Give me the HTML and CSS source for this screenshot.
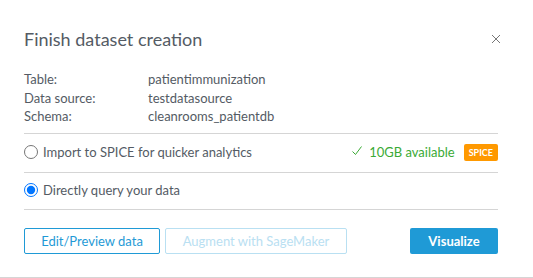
FILE: index.html
```html
<!DOCTYPE html>
<html lang="en">
<head>
  <meta charset="UTF-8" />
  <title>Finish dataset creation</title>
  <link rel="stylesheet" href="styles.css">
</head>
<body>
  <div class="modal">
    <header class="modal-header">
      <h2>Finish dataset creation</h2>
      <button class="close" aria-label="Close">
        <svg viewBox="0 0 10 10" width="10" height="10">
          <path d="M1 1 L9 9 M9 1 L1 9" stroke="#777" stroke-width="1" fill="none" />
        </svg>
      </button>
    </header>

    <dl class="details">
      <dt>Table:</dt><dd>patientimmunization</dd>
      <dt>Data source:</dt><dd>testdatasource</dd>
      <dt>Schema:</dt><dd>cleanrooms_patientdb</dd>
    </dl>

    <div class="options">
      <label class="option">
        <input type="radio" name="mode" />
        <span class="option-label">Import to SPICE for quicker analytics</span>
        <span class="capacity">
          <svg viewBox="0 0 10 10" width="10" height="10">
            <path d="M0.5 5.5 L3.5 8.5 L9.5 0.5" stroke="currentColor" stroke-width="1" fill="none" />
          </svg>
          10GB available
        </span>
        <span class="badge">SPICE</span>
      </label>
      <label class="option">
        <input type="radio" name="mode" checked />
        <span class="option-label">Directly query your data</span>
      </label>
    </div>

    <footer class="actions">
      <button class="btn btn-outline">Edit/Preview data</button>
      <button class="btn btn-disabled" disabled>Augment with SageMaker</button>
      <button class="btn btn-primary">Visualize</button>
    </footer>
  </div>
</body>
</html>
```

FILE: styles.css
```css
:root {
  --text-color: #545b64;
  --line-color: #d5d5d5;
  --blue: #1f9ad6;
  --green: #3aaa35;
  --orange: #ff9900;
}

body {
  margin: 0;
  background-color: #fff;
  font-family: Lato, Roboto, sans-serif;
  color: var(--text-color);
}

.modal {
  width: 533px;
  height: 278px;
  box-sizing: border-box;
  padding: 0 35px 0 24px;
  border-bottom: 1px solid var(--line-color);
}

.modal-header {
  display: flex;
  align-items: center;
  justify-content: space-between;
  padding-top: 28px;
}

.modal-header h2 {
  margin: 0;
  font-size: 18px;
  font-weight: 400;
  line-height: 22px;
}

.close {
  background: none;
  border: none;
  padding: 0;
  margin-right: -3px;
  display: flex;
}

.details {
  display: grid;
  grid-template-columns: 124px 1fr;
  margin: 20px 0 0 0;
  padding-bottom: 7px;
  font-size: 13px;
  line-height: 18.5px;
  border-bottom: 1px solid var(--line-color);
}

.details dt,
.details dd {
  margin: 0;
}

.option {
  display: flex;
  align-items: center;
  height: 38px;
  font-size: 13px;
  border-bottom: 1px solid var(--line-color);
}

.option + .option {
  height: 36px;
}

.option input {
  margin: 0 5px 2px 0;
  width: 14px;
  height: 14px;
}

.option-label {
  flex-grow: 1;
  margin-top: -1px;
}

.capacity {
  display: flex;
  align-items: center;
  gap: 7px;
  color: var(--green);
  margin-top: -1px;
}

.capacity svg {
  margin-bottom: 2px;
}

.badge {
  margin-left: 9px;
  background-color: var(--orange);
  color: #fff;
  font-size: 9px;
  font-weight: 700;
  padding: 0 5px;
  line-height: 17px;
  border-radius: 2px;
}

.actions {
  display: flex;
  gap: 5px;
  padding-top: 18px;
}

.btn {
  height: 26px;
  font-family: inherit;
  font-size: 13px;
  white-space: nowrap;
  border-radius: 2px;
  padding: 0;
  background-color: #fff;
}

.btn-outline {
  border: 1px solid var(--blue);
  color: var(--blue);
  width: 136px;
}

.btn-disabled {
  border: 1px solid #b9e0f2;
  color: #b9e0f2;
  width: 182px;
}

.btn-primary {
  margin-left: auto;
  width: 88px;
  border: none;
  background-color: var(--blue);
  color: #fff;
  font-weight: 700;
}
```
